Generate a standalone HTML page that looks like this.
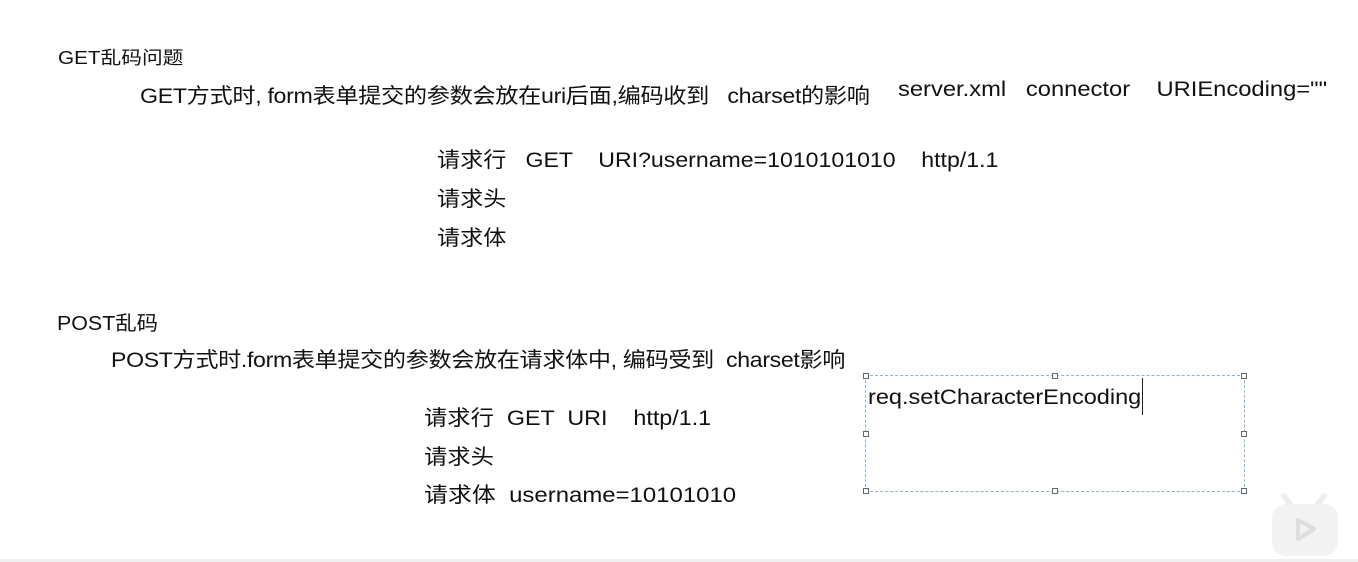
<!DOCTYPE html>
<html><head><meta charset="utf-8"><style>
body{margin:0;width:1358px;height:562px;background:#fff;position:relative;overflow:hidden;font-family:"Liberation Sans","Noto Sans CJK SC",sans-serif;color:#111}
.t{position:absolute;white-space:pre;font-size:21px;line-height:24px;transform-origin:0 50%}
.box{position:absolute;left:865px;top:375px;width:378px;height:115px;border:1px dashed #8ab4d0}
.h{position:absolute;width:4px;height:4px;border:1px solid #666;background:#fff}
</style></head><body>
<div class="t" style="left:58px;top:46px;font-size:18px;transform:scaleX(1.15)">GET乱码问题</div>
<div class="t" style="left:140px;top:85px;letter-spacing:-0.3px;transform:scaleX(1.104)">GET方式时, form表单提交的参数会放在uri后面,编码收到   charset的影响</div>
<div class="t" style="left:898px;top:78px;transform:scaleX(1.13)">server.xml   connector    URIEncoding=""</div>
<div class="t" style="left:437px;top:149px;transform:scaleX(1.10)">请求行   GET    URI?username=1010101010    http/1.1</div>
<div class="t" style="left:437px;top:188px;transform:scaleX(1.10)">请求头</div>
<div class="t" style="left:437px;top:227px;transform:scaleX(1.10)">请求体</div>
<div class="t" style="left:57px;top:312px;font-size:20px;transform:scaleX(1.07)">POST乱码</div>
<div class="t" style="left:111px;top:349px;letter-spacing:-0.3px;transform:scaleX(1.10)">POST方式时.form表单提交的参数会放在请求体中, 编码受到  charset影响</div>
<div class="t" style="left:424px;top:407px;transform:scaleX(1.11)">请求行  GET  URI    http/1.1</div>
<div class="t" style="left:424px;top:446px;transform:scaleX(1.11)">请求头</div>
<div class="t" style="left:424px;top:484px;transform:scaleX(1.14)">请求体  username=10101010</div>
<div class="box"></div>
<div class="h" style="left:863px;top:373px"></div><div class="h" style="left:1052px;top:373px"></div><div class="h" style="left:1241px;top:373px"></div>
<div class="h" style="left:863px;top:431px"></div><div class="h" style="left:1241px;top:431px"></div>
<div class="h" style="left:863px;top:488px"></div><div class="h" style="left:1052px;top:488px"></div><div class="h" style="left:1241px;top:488px"></div>
<div class="t" style="left:868px;top:386px;transform:scaleX(1.12)">req.setCharacterEncoding</div>
<div style="position:absolute;left:1142px;top:378px;width:1px;height:37px;background:#222"></div>
<svg style="position:absolute;left:1270px;top:492px" width="72" height="66" viewBox="0 0 72 66">
<path d="M20 12 L14 4 M48 12 L54 4" stroke="#eee" stroke-width="6" stroke-linecap="round"/>
<rect x="2" y="12" width="66" height="52" rx="14" fill="#f2f2f2"/>
<path d="M28 28 L44 37 L28 47 Z" fill="none" stroke="#ddd" stroke-width="4" stroke-linejoin="round"/>
</svg>
<div style="position:absolute;left:0;top:559px;width:1358px;height:3px;background:#f0f0f0"></div>
</body></html>
